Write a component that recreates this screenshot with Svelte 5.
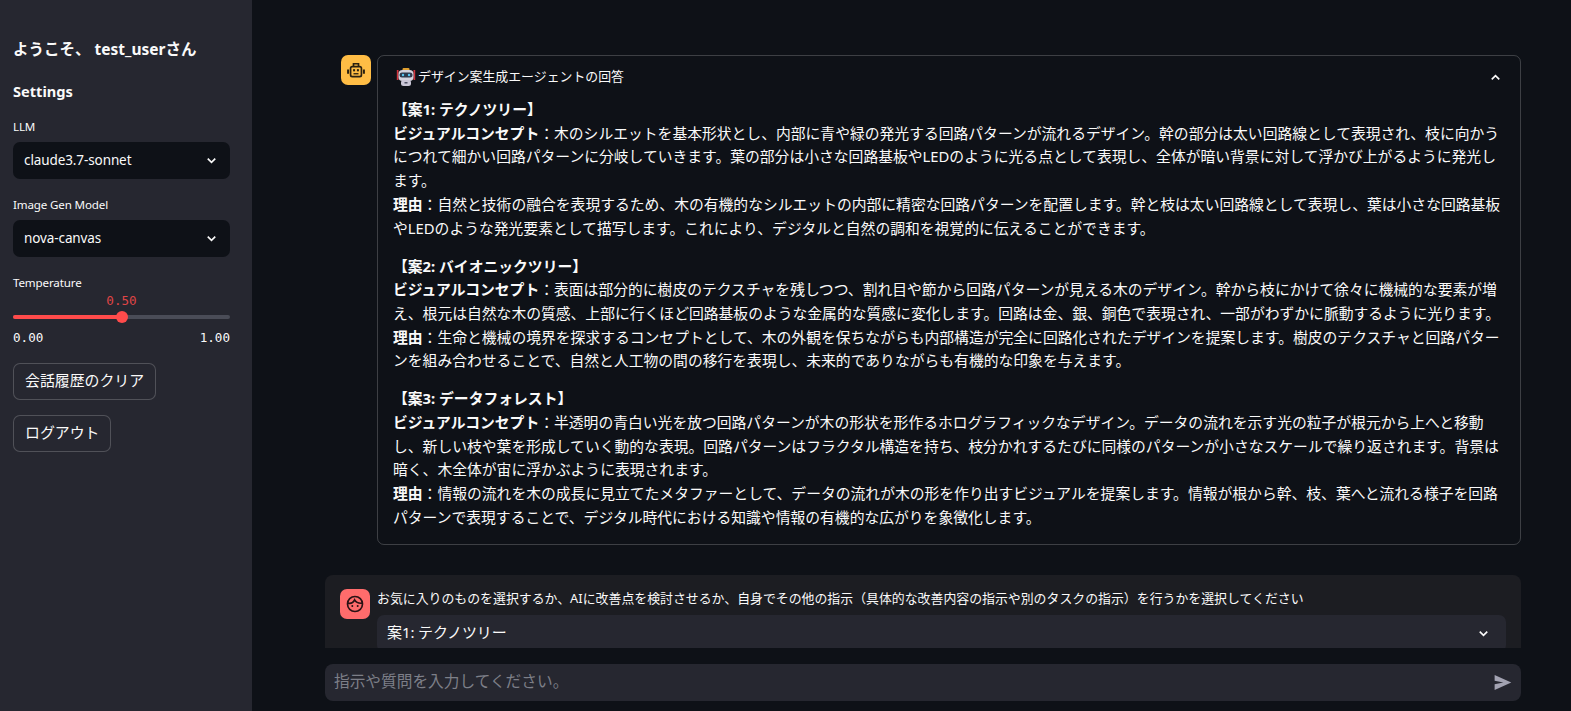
<script>
	const proposals = [
		{
			title: '【案1: テクノツリー】',
			concept:
				'木のシルエットを基本形状とし、内部に青や緑の発光する回路パターンが流れるデザイン。幹の部分は太い回路線として表現され、枝に向かうにつれて細かい回路パターンに分岐していきます。葉の部分は小さな回路基板やLEDのように光る点として表現し、全体が暗い背景に対して浮かび上がるように発光します。',
			reason:
				'自然と技術の融合を表現するため、木の有機的なシルエットの内部に精密な回路パターンを配置します。幹と枝は太い回路線として表現し、葉は小さな回路基板やLEDのような発光要素として描写します。これにより、デジタルと自然の調和を視覚的に伝えることができます。'
		},
		{
			title: '【案2: バイオニックツリー】',
			concept:
				'表面は部分的に樹皮のテクスチャを残しつつ、割れ目や節から回路パターンが見える木のデザイン。幹から枝にかけて徐々に機械的な要素が増え、根元は自然な木の質感、上部に行くほど回路基板のような金属的な質感に変化します。回路は金、銀、銅色で表現され、一部がわずかに脈動するように光ります。',
			reason:
				'生命と機械の境界を探求するコンセプトとして、木の外観を保ちながらも内部構造が完全に回路化されたデザインを提案します。樹皮のテクスチャと回路パターンを組み合わせることで、自然と人工物の間の移行を表現し、未来的でありながらも有機的な印象を与えます。'
		},
		{
			title: '【案3: データフォレスト】',
			concept:
				'半透明の青白い光を放つ回路パターンが木の形状を形作るホログラフィックなデザイン。データの流れを示す光の粒子が根元から上へと移動し、新しい枝や葉を形成していく動的な表現。回路パターンはフラクタル構造を持ち、枝分かれするたびに同様のパターンが小さなスケールで繰り返されます。背景は暗く、木全体が宙に浮かぶように表現されます。',
			reason:
				'情報の流れを木の成長に見立てたメタファーとして、データの流れが木の形を作り出すビジュアルを提案します。情報が根から幹、枝、葉へと流れる様子を回路パターンで表現することで、デジタル時代における知識や情報の有機的な広がりを象徴化します。'
		}
	];
</script>

{#snippet chevron(up = false)}
	<svg class="chev" class:up viewBox="0 0 24 24" width="15" height="15" fill="none" stroke="currentColor" stroke-width="2.6">
		<path d="M6 9l6 6 6-6" />
	</svg>
{/snippet}

<div class="app">
	<aside class="sidebar">
		<h2 class="welcome">ようこそ、 test_userさん</h2>
		<h3 class="settings">Settings</h3>

		<div class="field first">
			<span class="label">LLM</span>
			<div class="select">claude3.7-sonnet {@render chevron()}</div>
		</div>
		<div class="field second">
			<span class="label">Image Gen Model</span>
			<div class="select">nova-canvas {@render chevron()}</div>
		</div>

		<div class="field slider">
			<span class="label">Temperature</span>
			<div class="value">0.50</div>
			<div class="track"><div class="fill"><span class="thumb"></span></div></div>
			<div class="range"><span>0.00</span><span>1.00</span></div>
		</div>

		<button class="btn">会話履歴のクリア</button>
		<button class="btn">ログアウト</button>
	</aside>

	<main class="main">
		<div class="chat">
			<div class="message">
				<div class="avatar bot">
					<svg viewBox="0 0 24 24" width="20" height="20" fill="none" stroke="#2b2110" stroke-width="2">
						<rect x="5.5" y="8" width="13" height="12" rx="2" />
						<path d="M9 8V4.5h6V8" />
						<path d="M2.5 11.5v5M21.5 11.5v5" stroke-width="2.4" />
						<rect x="8.5" y="11" width="2.4" height="2.6" fill="#2b2110" stroke="none" />
						<rect x="13.1" y="11" width="2.4" height="2.6" fill="#2b2110" stroke="none" />
						<path d="M9 16.5h6" stroke-width="1.6" />
					</svg>
				</div>
				<div class="expander">
					<div class="exp-head">
						<span class="exp-title">
							<svg class="robot" viewBox="0 0 20 20" width="20" height="20">
								<rect x="0.8" y="3" width="1.7" height="10" fill="#d0323c" />
								<rect x="17.5" y="3" width="1.7" height="10" fill="#d0323c" />
								<rect x="6.5" y="1" width="7" height="3" rx="1.2" fill="#e0a030" />
								<rect x="2.5" y="3" width="15" height="11" rx="4" fill="#d5d3de" />
								<rect x="3.5" y="5.5" width="13" height="5" rx="2.5" fill="#2e3a4d" />
								<circle cx="7" cy="8" r="1.2" fill="#5cc8f2" />
								<circle cx="13" cy="8" r="1.2" fill="#5cc8f2" />
								<rect x="5" y="13" width="10" height="6" rx="2.5" fill="#c9c6d6" />
								<rect x="8.5" y="15" width="3" height="1.5" fill="#4d4f62" />
							</svg>
							デザイン案生成エージェントの回答
						</span>
						{@render chevron(true)}
					</div>
					<div class="exp-body">
						{#each proposals as p}
							<section class="proposal">
								<p><strong>{p.title}</strong></p>
								<p><strong>ビジュアルコンセプト</strong>：{p.concept}</p>
								<p><strong>理由</strong>：{p.reason}</p>
							</section>
						{/each}
					</div>
				</div>
			</div>

			<div class="message user">
				<div class="avatar face">
					<svg viewBox="0 0 24 24" width="20" height="20" fill="none" stroke="#2a1214" stroke-width="2">
						<circle cx="12" cy="12" r="9" />
						<path d="M3.5 11c3.5 .8 6.5 -.8 8 -4 1.5 2.6 5 4.4 9 4" />
						<circle cx="8.8" cy="14.5" r="1.2" fill="#2a1214" stroke="none" />
						<circle cx="15.2" cy="14.5" r="1.2" fill="#2a1214" stroke="none" />
					</svg>
				</div>
				<div class="user-body">
					<p class="prompt">お気に入りのものを選択するか、AIに改善点を検討させるか、自身でその他の指示（具体的な改善内容の指示や別のタスクの指示）を行うかを選択してください</p>
					<div class="select wide">案1: テクノツリー {@render chevron()}</div>
				</div>
			</div>
		</div>

		<div class="footer">
			<div class="input">
				<span class="placeholder">指示や質問を入力してください。</span>
				<svg viewBox="0 0 24 24" width="21" height="21" fill="#a3a3b2">
					<path d="M3 20.5v-6.6l10-1.9-10-1.9V3.5L22 12z" />
				</svg>
			</div>
		</div>
	</main>
</div>

<style>
	:global(body) {
		margin: 0;
		background: #0e1117;
	}
	.app {
		display: flex;
		height: 711px;
		overflow: hidden;
		color: #fafafa;
		font-family: 'Noto Sans', 'Noto Sans CJK JP', sans-serif;
		font-size: 14.8px;
		line-height: 23.7px;
	}
	p,
	h2,
	h3 {
		margin: 0;
	}
	.sidebar {
		width: 252px;
		flex: none;
		box-sizing: border-box;
		background: #262730;
		padding: 36px 22px 0 13px;
		display: flex;
		flex-direction: column;
		align-items: flex-start;
	}
	.welcome {
		font-size: 15.5px;
		font-weight: 700;
		line-height: 26px;
		margin-bottom: 16px;
	}
	.settings {
		font-size: 14.6px;
		font-weight: 700;
		line-height: 26px;
		margin-bottom: 14px;
	}
	.field {
		width: 100%;
	}
	.field.first {
		margin-bottom: 17px;
	}
	.field.second {
		margin-bottom: 17px;
	}
	.label {
		display: block;
		font-size: 11.6px;
		letter-spacing: -0.15px;
		line-height: 17px;
		margin-bottom: 7px;
	}
	.select {
		display: flex;
		align-items: center;
		justify-content: space-between;
		height: 37px;
		box-sizing: border-box;
		padding: 0 11px;
		background: #0e1117;
		border-radius: 7px;
		font-size: 13.5px;
		letter-spacing: -0.1px;
	}
	.chev {
		flex: none;
	}
	.chev.up {
		transform: rotate(180deg);
	}
	.slider {
		margin-bottom: 17px;
	}
	.slider .label {
		margin-bottom: 2px;
	}
	.value {
		font-family: 'DejaVu Sans Mono', monospace;
		font-size: 12.6px;
		line-height: 16px;
		color: #ff4b4b;
		text-align: center;
		opacity: 0.85;
		margin-bottom: 6px;
	}
	.track {
		height: 4px;
		border-radius: 2px;
		background: #4a4c57;
		margin-bottom: 11px;
	}
	.fill {
		position: relative;
		height: 100%;
		width: 50%;
		border-radius: 2px;
		background: #ff4b4b;
	}
	.thumb {
		position: absolute;
		right: -6px;
		top: -4px;
		width: 12px;
		height: 12px;
		border-radius: 50%;
		background: #ff4b4b;
	}
	.range {
		display: flex;
		justify-content: space-between;
		font-family: 'DejaVu Sans Mono', monospace;
		font-size: 12.6px;
		line-height: 16px;
	}
	.btn {
		height: 37px;
		box-sizing: border-box;
		padding: 0 11px 2px;
		margin: 0 0 15px;
		background: #262730;
		border: 1px solid rgba(250, 250, 250, 0.2);
		border-radius: 7px;
		color: #fafafa;
		font: inherit;
		font-size: 14.9px;
	}
	.main {
		flex: 1;
		min-width: 0;
		display: flex;
		flex-direction: column;
	}
	.chat {
		flex: 1;
		min-height: 0;
		overflow: hidden;
		padding: 39px 50px 0 73px;
	}
	.message {
		display: flex;
		gap: 6px;
		padding: 16px 0 16px 16px;
	}
	.message.user {
		gap: 7px;
		margin-top: 14px;
		padding: 14px 15px 16px 15px;
		border-radius: 8px;
		background: #1c1d22;
	}
	.avatar {
		flex: none;
		width: 30px;
		height: 30px;
		border-radius: 7px;
		display: flex;
		align-items: center;
		justify-content: center;
	}
	.bot {
		background: #ffbd45;
	}
	.face {
		background: #ff6c6c;
	}
	.expander {
		flex: 1;
		min-width: 0;
		border: 1px solid rgba(250, 250, 250, 0.2);
		border-radius: 7px;
	}
	.exp-head {
		display: flex;
		align-items: center;
		justify-content: space-between;
		height: 42px;
		padding: 0 17px 0 18px;
		font-size: 12.9px;
	}
	.exp-title {
		display: flex;
		align-items: center;
		gap: 2px;
	}
	.exp-body {
		padding: 0 15px 14px;
	}
	.proposal + .proposal {
		margin-top: 14.3px;
	}
	.user-body {
		flex: 1;
		min-width: 0;
	}
	.prompt {
		font-size: 12.9px;
		line-height: 18px;
		margin-bottom: 8px;
	}
	.select.wide {
		background: #262730;
		padding: 0 15px 0 10px;
		font-size: 15px;
	}
	.footer {
		flex: none;
		height: 63px;
		box-sizing: border-box;
		padding: 16px 50px 0 73px;
		background: #0e1117;
	}
	.input {
		display: flex;
		align-items: center;
		justify-content: space-between;
		height: 37px;
		box-sizing: border-box;
		padding: 0 8px 0 9px;
		background: #262730;
		border-radius: 8px;
	}
	.placeholder {
		font-size: 15.7px;
		line-height: 20px;
		padding-bottom: 3px;
		color: #7d7f88;
	}
</style>
